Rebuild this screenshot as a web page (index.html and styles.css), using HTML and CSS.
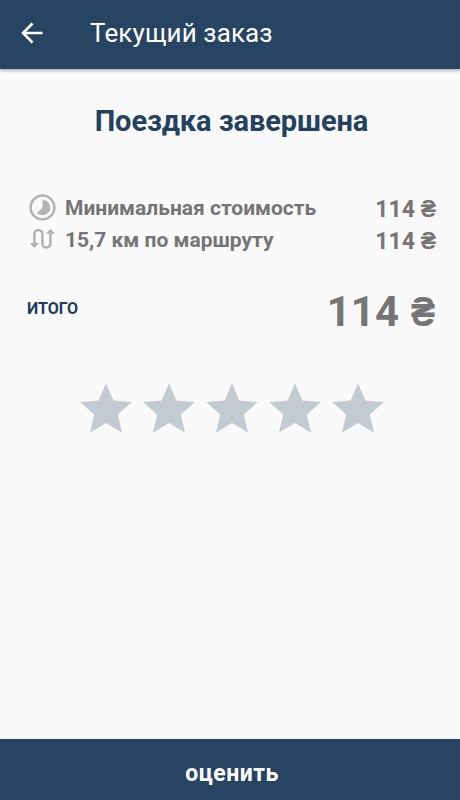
FILE: index.html
```html
<!DOCTYPE html>
<html lang="ru">
<head>
<meta charset="utf-8">
<title>Текущий заказ</title>
<link rel="stylesheet" href="styles.css">
</head>
<body>
<div class="screen">
  <header class="bar">
    <svg class="back" viewBox="0 0 32 32"><path d="M26.500 16H7.500M16.500 6.500 7 16 16.500 25.500"/></svg>
    <span class="bar-title">Текущий заказ</span>
  </header>
  <main class="content">
    <h1 class="title">Поездка завершена</h1>
    <div class="row">
      <svg class="icon" viewBox="0 0 28 28"><circle cx="13.500" cy="13.500" r="11.900" fill="none" stroke="#b3b3b3" stroke-width="2.500"/><path d="M13.500 5.800a7.700 7.700 0 1 1-5.450 13.150L13.500 13.500z" fill="#b3b3b3"/></svg>
      <span class="label">Минимальная стоимость</span><span class="price">114 ₴</span>
    </div>
    <div class="row">
      <svg class="icon" viewBox="0 0 28 28"><path d="M5.400 18V8a4 4 0 0 1 8 0v9.500a4 4 0 0 0 8 0V7" fill="none" stroke="#b3b3b3" stroke-width="2.600"/><path d="M.8 17h9.400L5.400 22zM16.700 7.800h9.400L21.400 2.800z" fill="#b3b3b3"/></svg>
      <span class="label">15,7 км по маршруту</span><span class="price">114 ₴</span>
    </div>
    <div class="total"><span class="total-label">ИТОГО</span><span class="total-price">114 <span class="currency">₴</span></span></div>
    <div class="stars">
      <svg class="star" viewBox="2 2 20 19"><path d="M12 17.270 18.180 21l-1.640-7.030L22 9.240l-7.190-.610L12 2 9.190 8.630 2 9.240l5.460 4.730L5.820 21z"/></svg>
      <svg class="star" viewBox="2 2 20 19"><path d="M12 17.270 18.180 21l-1.640-7.030L22 9.240l-7.190-.610L12 2 9.190 8.630 2 9.240l5.460 4.730L5.820 21z"/></svg>
      <svg class="star" viewBox="2 2 20 19"><path d="M12 17.270 18.180 21l-1.640-7.030L22 9.240l-7.190-.610L12 2 9.190 8.630 2 9.240l5.460 4.730L5.820 21z"/></svg>
      <svg class="star" viewBox="2 2 20 19"><path d="M12 17.270 18.180 21l-1.640-7.030L22 9.240l-7.190-.610L12 2 9.190 8.630 2 9.240l5.460 4.730L5.820 21z"/></svg>
      <svg class="star" viewBox="2 2 20 19"><path d="M12 17.270 18.180 21l-1.640-7.030L22 9.240l-7.190-.610L12 2 9.190 8.630 2 9.240l5.460 4.730L5.820 21z"/></svg>
    </div>
  </main>
  <button class="rate">оценить</button>
</div>
</body>
</html>
```
FILE: styles.css
```css
* { box-sizing: border-box; }
body { margin: 0; font-family: Roboto, sans-serif; }
.screen { width: 460px; height: 800px; display: flex; flex-direction: column; background: #fafafa; }
.bar { height: 69px; background: #274463; display: flex; align-items: center; padding: 0 16px 4px; box-shadow: 0 1px 4px rgba(0,0,0,.4); }
.back { width: 32px; height: 32px; fill: none; stroke: #fff; stroke-width: 2.6; }
.bar-title { margin-left: 42px; font-size: 26px; color: #fff; letter-spacing: .12px; }
.content { flex: 1; padding: 35px 24px 0 27px; }
.title { margin: 0 0 53px; height: 35px; line-height: 35px; font-size: 29px; font-weight: 700; color: #23425f; text-align: center; letter-spacing: -.08px; }
.row { display: flex; align-items: center; height: 32px; color: #757575; font-size: 21px; font-weight: 700; }
.icon { width: 28px; height: 28px; margin: 0 8px 0 2px; }
.label { flex: 1; }
.price { font-size: 23px; padding-top: 2px; }
.total { display: flex; align-items: center; justify-content: space-between; height: 50px; margin-top: 30px; }
.total-label { font-size: 16px; font-weight: 700; color: #203c59; margin-top: -5px; }
.total-price { display: flex; gap: 12px; font-size: 42px; font-weight: 700; color: #757575; }
.currency { display: inline-block; width: 25px; transform: scaleX(.86); transform-origin: left; }
.stars { display: flex; justify-content: center; gap: 11px; margin-top: 46.5px; }
.star { width: 52px; height: 50px; fill: #c4cad2; }
.rate { height: 61px; border: 0; padding: 7px 0 0 4px; background: #274463; color: #fff; font: 700 23px Roboto, sans-serif; letter-spacing: .5px; }
```
